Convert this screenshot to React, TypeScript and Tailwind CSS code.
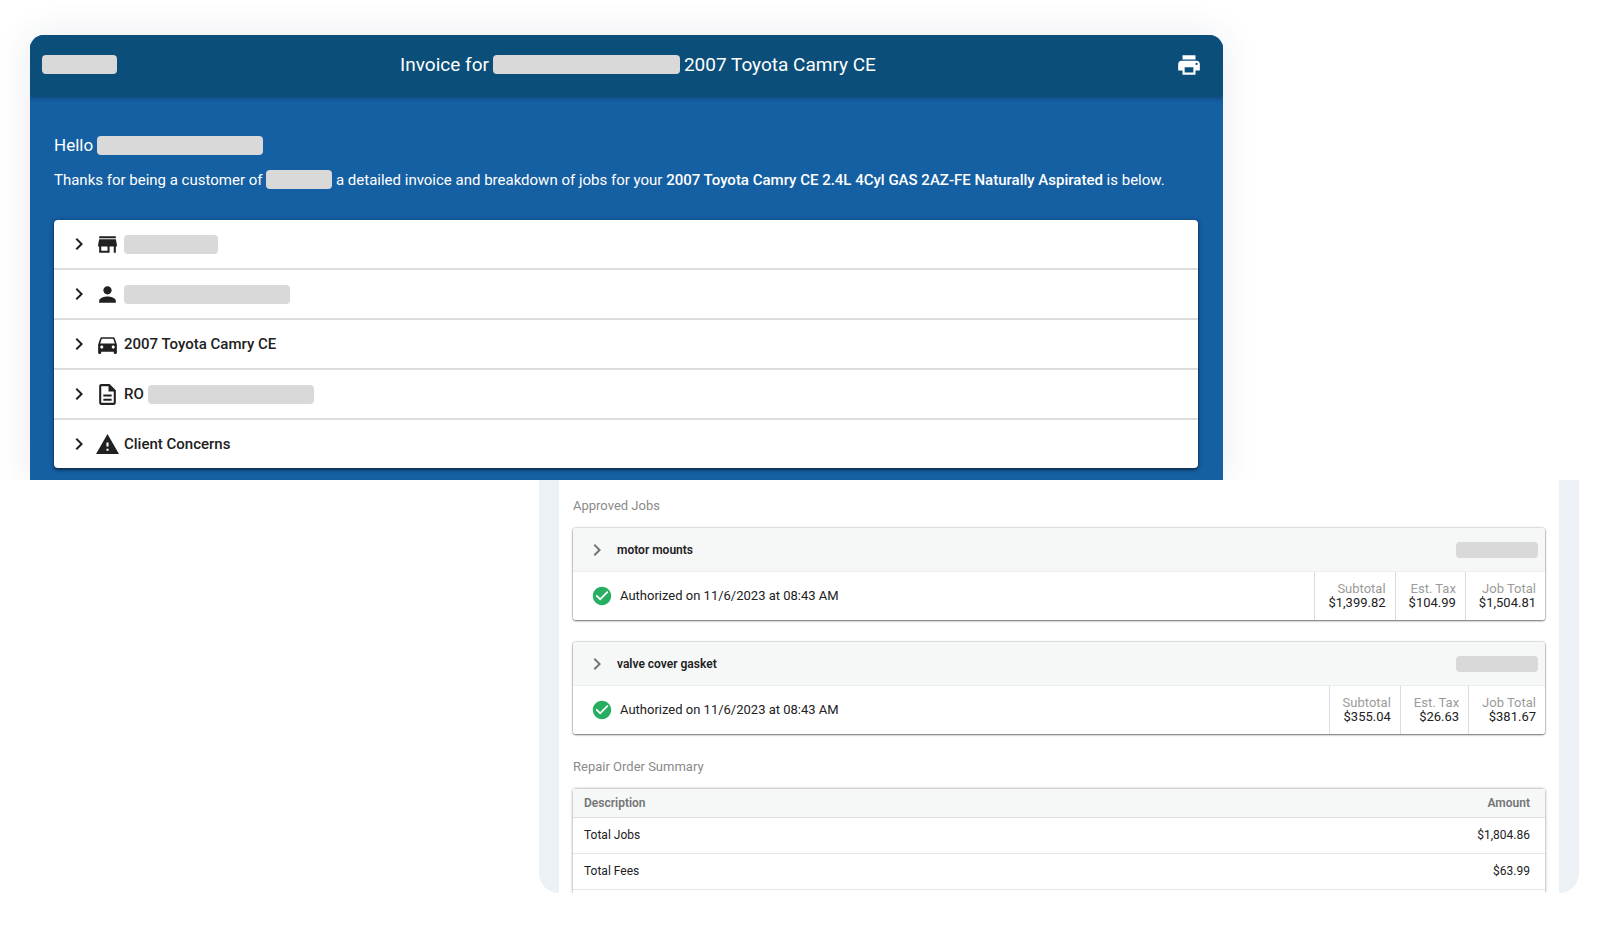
import { useState, type ReactNode } from "react";
import type { IconType } from "react-icons";
import {
  MdCheckCircle,
  MdChevronRight,
  MdDirectionsCar,
  MdOutlineDescription,
  MdPerson,
  MdPrint,
  MdStore,
  MdWarning,
} from "react-icons/md";

function Redacted({ className }: { className: string }) {
  return <span aria-hidden="true" className={`inline-block shrink-0 rounded bg-[#d9d9d9] ${className}`} />;
}

function DetailRow({ icon: Icon, name, children }: { icon: IconType; name: string; children: ReactNode }) {
  const [open, setOpen] = useState(false);
  return (
    <li>
      <button
        type="button"
        aria-label={name}
        aria-expanded={open}
        onClick={() => setOpen(!open)}
        className="flex h-12 w-full items-center gap-1 pl-[13px] text-left text-[15px] font-medium"
      >
        <MdChevronRight className="size-6" />
        <Icon className="size-[25px]" />
        {children}
      </button>
    </li>
  );
}

type Job = { title: string; subtotal: string; tax: string; total: string };

const jobs: Job[] = [
  { title: "motor mounts", subtotal: "$1,399.82", tax: "$104.99", total: "$1,504.81" },
  { title: "valve cover gasket", subtotal: "$355.04", tax: "$26.63", total: "$381.67" },
];

function Figure({ label, value }: { label: string; value: string }) {
  return (
    <div className="flex flex-col justify-center border-l border-[#dcdcdc] pr-[9px] pl-[13px] text-right text-[13px] leading-[14px]">
      <dt className="text-[#9b9b9b]">{label}</dt>
      <dd>{value}</dd>
    </div>
  );
}

function JobCard({ job }: { job: Job }) {
  const [open, setOpen] = useState(false);
  return (
    <article className="overflow-hidden rounded-[3px] shadow-[0_1px_2px_rgba(0,0,0,0.5),0_0_2px_rgba(0,0,0,0.4)]">
      <div className="flex h-11 items-center border-b border-[#eceeee] bg-[#f6f8f8] pr-[7px]">
        <button
          type="button"
          aria-expanded={open}
          onClick={() => setOpen(!open)}
          className="flex flex-1 items-center gap-2 pl-3 text-left text-[12px] font-semibold"
        >
          <MdChevronRight className="size-6 text-[#757575]" />
          {job.title}
        </button>
        <Redacted className="h-4 w-[82px]" />
      </div>
      <div className="flex h-12 justify-between bg-white">
        <p className="flex items-center gap-[7px] pl-[18px] text-[13px]">
          <MdCheckCircle className="size-[22px] text-[#27ae60]" />
          Authorized on 11/6/2023 at 08:43 AM
        </p>
        <dl className="flex">
          <Figure label="Subtotal" value={job.subtotal} />
          <Figure label="Est. Tax" value={job.tax} />
          <Figure label="Job Total" value={job.total} />
        </dl>
      </div>
    </article>
  );
}

function InvoicePanel() {
  return (
    <div className="overflow-hidden pt-[35px] pr-[381px] pl-[30px]">
      <section className="overflow-hidden rounded-t-[14px] bg-[#155fa3] pb-3 text-white shadow-[0_0_36px_rgba(30,50,90,0.1)]">
        <header className="flex h-[61px] items-center justify-between bg-[#0b4e79] pr-1 pb-0.5 pl-3 shadow-[0_1px_5px_rgba(0,0,0,0.4)]">
          <Redacted className="h-[19px] w-[75px]" />
          <h1 className="flex items-center gap-1 text-[19px] leading-6">
            Invoice for
            <Redacted className="h-[19px] w-[187px]" />
            2007 Toyota Camry CE
          </h1>
          <button type="button" aria-label="Print" className="flex h-12 w-15 items-center justify-center">
            <MdPrint className="size-[26px]" />
          </button>
        </header>
        <div className="pt-[37px] pr-[25px] pl-6">
          <p className="flex items-center gap-1 text-[17px] leading-6">
            Hello
            <Redacted className="h-[19px] w-[166px]" />
          </p>
          <p className="mt-[11px] text-[15px] leading-6">
            Thanks for being a customer of <Redacted className="h-[19px] w-[66px] align-[-4px]" /> a detailed invoice and
            breakdown of jobs for your{" "}
            <strong className="font-medium">2007 Toyota Camry CE 2.4L 4Cyl GAS 2AZ-FE Naturally Aspirated</strong> is
            below.
          </p>
          <ul className="mt-7 divide-y-2 divide-[#dcdcdc] overflow-hidden rounded bg-white text-[#212121] shadow-[0_1px_5px_rgba(0,0,0,0.45),0_2px_2px_rgba(0,0,0,0.3)]">
            <DetailRow icon={MdStore} name="Shop">
              <Redacted className="h-[19px] w-[94px]" />
            </DetailRow>
            <DetailRow icon={MdPerson} name="Customer">
              <Redacted className="h-[19px] w-[166px]" />
            </DetailRow>
            <DetailRow icon={MdDirectionsCar} name="2007 Toyota Camry CE">
              2007 Toyota Camry CE
            </DetailRow>
            <DetailRow icon={MdOutlineDescription} name="RO">
              RO
              <Redacted className="h-[19px] w-[166px]" />
            </DetailRow>
            <DetailRow icon={MdWarning} name="Client Concerns">
              Client Concerns
            </DetailRow>
          </ul>
        </div>
      </section>
    </div>
  );
}

function JobsPanel() {
  return (
    <div className="pr-[25px] pb-[35px] pl-[539px]">
      <section className="overflow-hidden rounded-b-[20px] bg-[#ebf1f5] px-5">
        <div className="bg-white px-[14px] text-[#212121]">
          <h2 className="pt-4 pb-3 text-[13px] leading-5 text-[#8a8a8a]">Approved Jobs</h2>
          <div className="flex flex-col gap-[22px]">
            {jobs.map((job) => (
              <JobCard key={job.title} job={job} />
            ))}
          </div>
          <h2 className="pt-[23px] pb-3 text-[13px] leading-5 text-[#8a8a8a]">Repair Order Summary</h2>
          <div className="rounded-t-[3px] pb-[3px] shadow-[0_0_3px_rgba(0,0,0,0.5)]">
            <table className="w-full border-collapse text-[12px]">
              <thead className="bg-[#f6f8f8] text-[#757575]">
                <tr className="h-7 border-b border-[#dde0e0]">
                  <th className="pl-[11px] text-left font-semibold">Description</th>
                  <th className="pr-[15px] text-right font-semibold">Amount</th>
                </tr>
              </thead>
              <tbody>
                <tr className="h-9 border-b border-[#e4e6e6]">
                  <td className="pl-[11px]">Total Jobs</td>
                  <td className="pr-[15px] text-right">$1,804.86</td>
                </tr>
                <tr className="h-9 border-b border-[#e4e6e6]">
                  <td className="pl-[11px]">Total Fees</td>
                  <td className="pr-[15px] text-right">$63.99</td>
                </tr>
              </tbody>
            </table>
          </div>
        </div>
      </section>
    </div>
  );
}

export default function App() {
  return (
    <main className="min-h-screen bg-white font-['Roboto',sans-serif]">
      <InvoicePanel />
      <JobsPanel />
    </main>
  );
}
